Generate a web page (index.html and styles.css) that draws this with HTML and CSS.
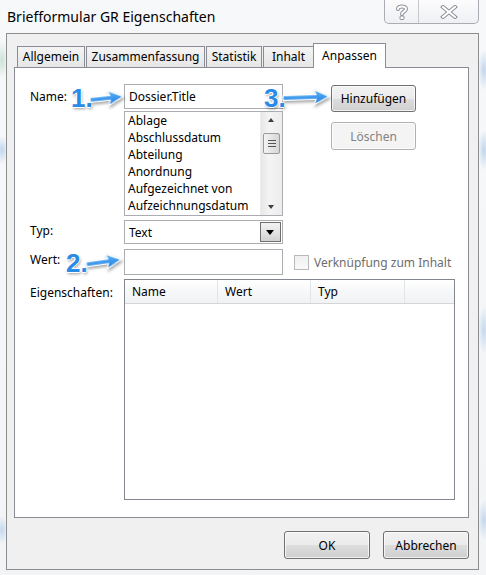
FILE: index.html
```html
<!DOCTYPE html>
<html>
<head>
    <title>Briefformular GR Eigenschaften</title>
    <meta charset="UTF-8">
    <link rel="stylesheet" href="styles.css">
</head>
<body>
<div class="window">
    <div class="titlebar">
        <span class="title">Briefformular GR Eigenschaften</span>
        <div class="caption">
            <span class="cap-btn help">
                <svg width="14" height="16" viewBox="0 0 14 16">
                    <path d="M3 5 C3 1.5 11 1.5 11 5 C11 7.5 7 7.5 7 10" fill="none" stroke="#8a8f96" stroke-width="4" stroke-linecap="round"/>
                    <path d="M3 5 C3 1.5 11 1.5 11 5 C11 7.5 7 7.5 7 10" fill="none" stroke="#fff" stroke-width="2" stroke-linecap="round"/>
                    <rect x="5" y="12" width="4" height="3.5" rx="1" fill="#fff" stroke="#8a8f96"/>
                </svg>
            </span>
            <span class="cap-btn close">
                <svg width="18" height="14" viewBox="0 0 18 14">
                    <path d="M3 2 L15 12 M15 2 L3 12" stroke="#8a8f96" stroke-width="4" stroke-linecap="square"/>
                    <path d="M3 2 L15 12 M15 2 L3 12" stroke="#fff" stroke-width="2" stroke-linecap="square"/>
                </svg>
            </span>
        </div>
    </div>

    <div class="client">
        <div class="tabs">
            <span class="tab t-allgemein">Allgemein</span>
            <span class="tab t-zusammen">Zusammenfassung</span>
            <span class="tab t-statistik">Statistik</span>
            <span class="tab t-inhalt">Inhalt</span>
            <span class="tab tab-active">Anpassen</span>
        </div>

        <div class="panel">
            <div class="form">
                <label class="lbl">Name:</label>
                <div class="textbox">Dossier.Title</div>
                <button class="btn btn-side">Hinzufügen</button>

                <div></div>
                <div class="listbox">
                    <ul class="items">
                        <li>Ablage</li>
                        <li>Abschlussdatum</li>
                        <li>Abteilung</li>
                        <li>Anordnung</li>
                        <li>Aufgezeichnet von</li>
                        <li>Aufzeichnungsdatum</li>
                    </ul>
                    <div class="vscroll">
                        <span class="arrow up"></span>
                        <span class="thumb"><i></i><i></i><i></i></span>
                        <span class="track"></span>
                        <span class="arrow down"></span>
                    </div>
                </div>
                <button class="btn btn-side btn-disabled">Löschen</button>

                <label class="lbl">Typ:</label>
                <div class="combo">
                    <span>Text</span>
                    <span class="drop"></span>
                </div>
                <div></div>

                <label class="lbl">Wert:</label>
                <div class="textbox textbox-wert"></div>
                <label class="check">
                    <span class="box"></span>
                    Verknüpfung zum Inhalt
                </label>

                <label class="lbl lbl-top">Eigenschaften:</label>
                <div class="listview">
                    <div class="lv-head">
                        <span class="col c-name">Name</span>
                        <span class="col c-wert">Wert</span>
                        <span class="col c-typ">Typ</span>
                        <span class="col c-rest"></span>
                    </div>
                </div>
            </div>
        </div>

        <div class="actions">
            <button class="btn btn-main">OK</button>
            <button class="btn btn-main">Abbrechen</button>
        </div>
    </div>

    <!-- Markierungen 1-3 -->
    <span class="mark m1">1.</span>
    <span class="mark m2">2.</span>
    <span class="mark m3">3.</span>
    <svg class="arrows" width="486" height="575" viewBox="0 0 486 575">
        <defs>
            <linearGradient id="blue" x1="0" y1="0" x2="0" y2="1">
                <stop offset="0" stop-color="#62b4f8"/>
                <stop offset="1" stop-color="#1c7ee0"/>
            </linearGradient>
        </defs>
        <!-- Spitze bei 0,0, Schaft nach links -->
        <path class="arr" transform="translate(123 96.5) rotate(-6)" d="M0 0 L-15 -7.5 L-13 -2.4 L-33 -2.4 L-33 2.4 L-13 2.4 L-15 7.5 Z"/>
        <path class="arr" transform="translate(121 259.5) rotate(-8)" d="M0 0 L-15 -7.5 L-13 -2.4 L-35 -2.4 L-35 2.4 L-13 2.4 L-15 7.5 Z"/>
        <path class="arr" transform="translate(329 96.5) rotate(-2)" d="M0 0 L-15 -7.5 L-13 -2.4 L-46 -2.4 L-46 2.4 L-13 2.4 L-15 7.5 Z"/>
    </svg>
</div>
</body>
</html>
```

FILE: styles.css
```css
html {
    font-family: "Noto Sans", "Open Sans", sans-serif;
    font-size: 12px;
    color: #000;
}
body {
    margin: 0;
    background: #f5f7f8;
}
.window {
    position: relative;
    width: 486px;
    height: 575px;
    box-sizing: border-box;
    padding: 0 7px 5px 6px;
    display: flex;
    flex-direction: column;
    overflow: hidden;
    background:
        radial-gradient(ellipse 6px 18px at 2px 60px, rgba(150,200,170,.45), transparent),
        radial-gradient(ellipse 6px 14px at 2px 150px, rgba(140,180,230,.5), transparent),
        radial-gradient(ellipse 6px 14px at 2px 530px, rgba(140,180,230,.45), transparent),
        radial-gradient(ellipse 6px 20px at 484px 70px, rgba(140,180,230,.5), transparent),
        radial-gradient(ellipse 6px 20px at 484px 150px, rgba(140,180,230,.5), transparent),
        radial-gradient(ellipse 6px 24px at 484px 330px, rgba(140,180,230,.45), transparent),
        radial-gradient(ellipse 6px 20px at 484px 520px, rgba(140,180,230,.45), transparent),
        linear-gradient(#f6f8f9, #f2f4f5);
}

/* Titelleiste */
.titlebar {
    height: 33px;
    display: flex;
    justify-content: space-between;
    align-items: flex-start;
}
.title {
    font-size: 14px;
    line-height: 20px;
    padding: 7px 0 0 1px;
}
.caption {
    display: flex;
    height: 23px;
    border: 1px solid #a9adb3;
    border-top: none;
    border-radius: 0 0 5px 5px;
    background: linear-gradient(#fcfcfd, #eef0f2);
    overflow: hidden;
}
.cap-btn {
    display: flex;
    align-items: center;
    justify-content: center;
}
.help {
    width: 33px;
    border-right: 1px solid #c4c7cc;
}
.close {
    width: 59px;
}

/* Dialog-Fläche */
.client {
    flex: 1;
    border: 1px solid #8c8d8e;
    background: #f0f0f0;
    padding: 9px 9px 0 7px;
    display: flex;
    flex-direction: column;
}
.tabs {
    height: 24px;
    display: flex;
    align-items: flex-end;
    padding-left: 3px;
    position: relative;
    z-index: 1;
}
.tab {
    box-sizing: border-box;
    height: 21px;
    border: 1px solid #898c95;
    border-bottom: none;
    background: linear-gradient(#f4f4f4, #e6e6e6);
    text-align: center;
    line-height: 20px;
    margin-right: 1px;
}
.t-allgemein { width: 68px; }
.t-zusammen { width: 119px; }
.t-statistik { width: 56px; }
.t-inhalt { width: 51px; margin-right: 0; }
.tab-active {
    width: 73px;
    height: 25px;
    margin-bottom: -1px;
    margin-left: -1px;
    background: #fff;
    line-height: 24px;
    padding-bottom: 2px;
}
.panel {
    height: 451px;
    box-sizing: border-box;
    border: 1px solid #898c95;
    background: #fff;
    padding: 16px 0 0 15px;
}

.form {
    display: grid;
    grid-template-columns: 94px 159px 1fr;
    grid-template-rows: 25px 107px 28px 31px 225px;
}
.lbl {
    align-self: center;
    line-height: 17px;
}
.lbl-top {
    align-self: start;
    margin-top: 9px;
}
.textbox {
    box-sizing: border-box;
    height: 25px;
    border: 1px solid #abadb3;
    background: #fff;
    padding: 0 4px;
    line-height: 23px;
}
.textbox-wert {
    height: 26px;
    margin-top: 5px;
}
.listbox {
    height: 105px;
    margin-top: 2px;
    box-sizing: border-box;
    border: 1px solid #abadb3;
    display: flex;
}
.items {
    flex: 1;
    list-style: none;
    margin: 0;
    padding: 0 0 0 3px;
    line-height: 17px;
    white-space: nowrap;
    overflow: hidden;
}
.vscroll {
    width: 21px;
    display: flex;
    flex-direction: column;
    align-items: center;
    background: linear-gradient(90deg, #e7e7e7, #f4f4f4 40%, #ececec);
    border-left: 1px solid #ececec;
}
.arrow {
    height: 16px;
    width: 17px;
    position: relative;
}
.arrow::after {
    content: "";
    position: absolute;
    left: 5px;
    border-left: 3.5px solid transparent;
    border-right: 3.5px solid transparent;
}
.arrow.up::after {
    top: 6px;
    border-bottom: 4px solid #404040;
}
.arrow.down::after {
    top: 6px;
    border-top: 4px solid #404040;
}
.thumb {
    box-sizing: border-box;
    width: 17px;
    height: 21px;
    margin-top: 5px;
    border: 1px solid #9a9a9a;
    border-radius: 2px;
    background: linear-gradient(90deg, #f3f3f3, #e2e2e2 60%, #d6d6d6);
    display: flex;
    flex-direction: column;
    align-items: center;
    justify-content: center;
    gap: 2px;
}
.thumb i {
    width: 8px;
    height: 1px;
    background: #555;
}
.track {
    flex: 1;
}
.combo {
    box-sizing: border-box;
    height: 24px;
    margin-top: 4px;
    border: 1px solid #abadb3;
    background: #fff;
    display: flex;
    justify-content: space-between;
    align-items: center;
    padding: 0 1px 0 4px;
}
.drop {
    box-sizing: border-box;
    width: 21px;
    height: 20px;
    border: 1px solid #707070;
    background: linear-gradient(#f3f3f3, #e4e4e4 50%, #d2d2d2);
    position: relative;
}
.drop::after {
    content: "";
    position: absolute;
    left: 5px;
    top: 7px;
    border-left: 4.5px solid transparent;
    border-right: 4.5px solid transparent;
    border-top: 5px solid #000;
}
.check {
    display: flex;
    align-items: center;
    gap: 5px;
    margin: 5px 0 0 11px;
    color: #6d6d6d;
    white-space: nowrap;
    height: 26px;
}
.box {
    box-sizing: border-box;
    width: 15px;
    height: 15px;
    border: 1px solid #b9b9b9;
    background: linear-gradient(#f0f0f0, #fafafa);
}
.listview {
    grid-column: 2 / 4;
    width: 331px;
    height: 221px;
    margin-top: 4px;
    box-sizing: border-box;
    border: 1px solid #828790;
    background: #fff;
}
.lv-head {
    height: 23px;
    display: flex;
    background: linear-gradient(#fff, #f7f8f9 45%, #f1f2f4);
    border-bottom: 1px solid #d5d5d5;
}
.col {
    box-sizing: border-box;
    padding-left: 7px;
    line-height: 23px;
    border-right: 1px solid #e3e4e6;
}
.c-name { width: 93px; }
.c-wert { width: 93px; }
.c-typ { width: 94px; }
.c-rest { flex: 1; border-right: none; }

/* Schaltflächen */
.btn {
    font-family: inherit;
    font-size: 12px;
    color: #000;
    box-sizing: border-box;
    height: 27px;
    width: 85px;
    padding: 0;
    border: 1px solid #707070;
    border-radius: 3px;
    background: linear-gradient(#f2f2f2, #ebebeb 50%, #dddddd 51%, #cfcfcf);
    box-shadow: inset 0 0 0 1px rgba(255,255,255,.7);
}
.btn-side {
    justify-self: start;
    align-self: start;
    margin-left: 48px;
    margin-top: 1px;
}
.btn-disabled {
    margin-top: 13px;
    height: 28px;
    color: #838383;
    border-color: #adb2b5;
    background: #f4f4f4;
}
.actions {
    display: flex;
    justify-content: flex-end;
    gap: 13px;
    margin-top: 13px;
}
.btn-main {
    width: 86px;
    height: 28px;
}

/* Markierungen */
.mark {
    position: absolute;
    font-family: "Liberation Sans", Arial, sans-serif;
    font-weight: bold;
    font-size: 26px;
    line-height: 26px;
    color: #2a8ae8;
    text-shadow: -1px 0 #fff, 1px 0 #fff, 0 -1px #fff, 0 1px #fff, 1px 2px 3px rgba(0,0,0,.4);
}
.m1 { left: 71px; top: 85px; }
.m2 { left: 66px; top: 250px; }
.m3 { left: 264px; top: 85px; }
.arrows {
    position: absolute;
    left: 0;
    top: 0;
}
.arr {
    fill: url(#blue);
    stroke: #fff;
    stroke-width: 1.2;
    filter: drop-shadow(1px 2px 1.5px rgba(0,0,0,.35));
}
```
